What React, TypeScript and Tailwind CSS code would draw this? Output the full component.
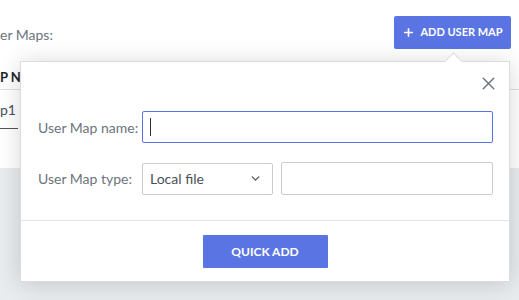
import { Plus, X, ChevronDown } from "lucide-react";

export default function App() {
  return (
    <div
      className="w-[519px] h-[300px] relative overflow-hidden bg-[#e9ecef]"
      style={{ fontFamily: "Lato, 'Noto Sans', sans-serif" }}
    >
      {/* Underlying card */}
      <div className="bg-white h-[168px] flex flex-col">
        <div className="flex items-start justify-between pt-[16px] pr-[8px]">
          <div className="text-[14px] text-[#6c757d] mt-[8px]">er Maps:</div>
          <button className="h-[33px] w-[117px] bg-[#5a75e3] text-white rounded-[2px] flex items-center justify-center gap-[5px] text-[11px] font-bold">
            <Plus size={13} strokeWidth={3} />
            ADD USER MAP
          </button>
        </div>
        <div className="mt-[17px] h-[24px] flex items-center border-b border-[#dee2e6]">
          <div className="text-[13px] font-bold text-[#212529]">P NAME</div>
        </div>
        <div className="h-[41px] flex items-center">
          <div className="w-[18px] text-[14px] text-[#495057] border-b border-[#555] pb-[8px] pt-[6px]">p1</div>
        </div>
      </div>

      {/* Popover */}
      <div className="absolute left-[20px] top-[61px] w-[490px] h-[221px] bg-white border border-[#dcdcdc] shadow-[0_2px_22px_rgba(0,0,0,0.16)] flex flex-col">
        <div className="absolute left-[426px] top-[-7px] w-[13px] h-[13px] bg-white border-t border-l border-[#dcdcdc] rotate-45" />
        <button className="absolute right-[10px] top-[11px] text-[#6c757d]">
          <X size={21} strokeWidth={1.6} />
        </button>
        <div className="flex flex-col gap-[19px] pt-[49px] pl-[17px] pr-[16px] h-[159px] border-b border-[#e3e3e3]">
          <div className="flex items-center">
            <label className="w-[104px] text-[14px] text-[#6c757d]">User Map name:</label>
            <div className="flex-1 h-[32px] border border-[#5a75e3] rounded-[2px] flex items-center pl-[7px]">
              <div className="w-[1px] h-[18px] bg-[#333]" />
            </div>
          </div>
          <div className="flex items-center">
            <label className="w-[104px] text-[14px] text-[#6c757d]">User Map type:</label>
            <div className="w-[131px] h-[32px] border border-[#ccc] rounded-[2px] flex items-center justify-between pl-[7px] pr-[10px] text-[14px] text-[#495057]">
              Local file
              <ChevronDown size={13} strokeWidth={2.5} className="text-[#555]" />
            </div>
            <div className="flex-1 ml-[8px] h-[33px] border border-[#ccc] rounded-[2px]" />
          </div>
        </div>
        <div className="flex justify-center pt-[14px]">
          <button className="w-[125px] h-[33px] bg-[#5a75e3] text-white text-[12px] font-bold rounded-[1px]">
            QUICK ADD
          </button>
        </div>
      </div>
    </div>
  );
}
